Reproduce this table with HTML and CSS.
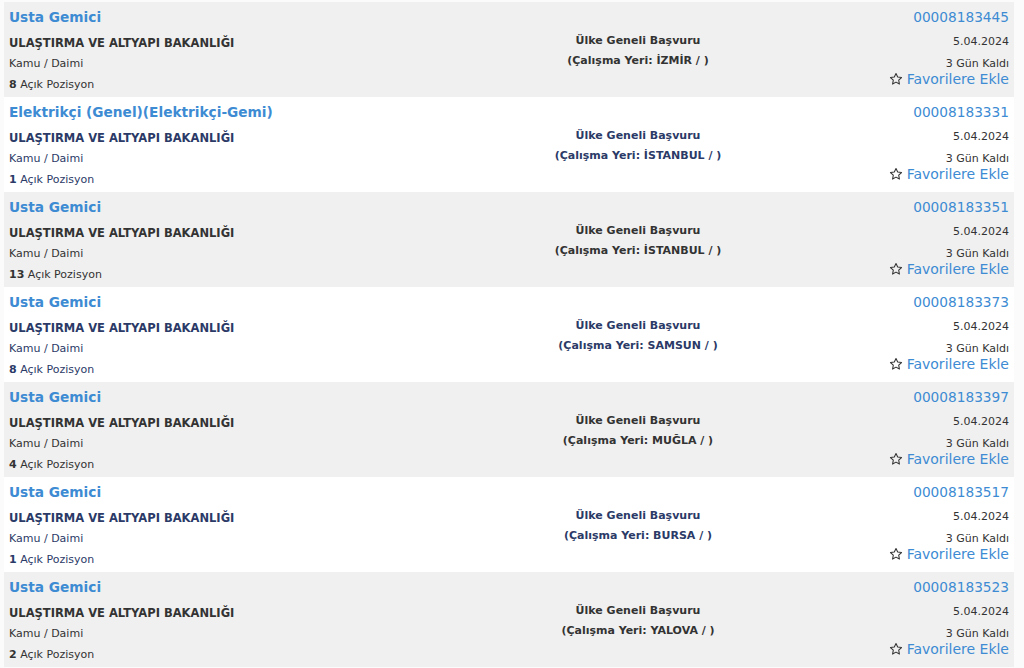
FILE: index.html
```html
<!DOCTYPE html>
<html lang="tr">
<head>
<meta charset="utf-8">
<title>İlanlar</title>
<link rel="stylesheet" href="styles.css">
</head>
<body>
<div class="list">
  <div class="row grey">
    <div class="left">
      <a class="title">Usta Gemici</a>
      <div class="org">ULAŞTIRMA VE ALTYAPI BAKANLIĞI</div>
      <div class="line">Kamu / Daimi</div>
      <div class="line"><b>8</b> Açık Pozisyon</div>
    </div>
    <div class="mid">
      <div class="line b">Ülke Geneli Başvuru</div>
      <div class="line b">(Çalışma Yeri: İZMİR / )</div>
    </div>
    <div class="right">
      <a class="id">00008183445</a>
      <div class="date">5.04.2024</div>
      <div class="left-days">3 Gün Kaldı</div>
      <a class="fav"><svg class="star" viewBox="0 0 24 24"><path d="M12 2.6l2.9 6.1 6.6.8-4.9 4.6 1.3 6.6L12 17.4l-5.9 3.3 1.3-6.6-4.9-4.6 6.6-.8z"/></svg>Favorilere Ekle</a>
    </div>
  </div>
  <div class="row white">
    <div class="left">
      <a class="title">Elektrikçi (Genel)(Elektrikçi-Gemi)</a>
      <div class="org">ULAŞTIRMA VE ALTYAPI BAKANLIĞI</div>
      <div class="line">Kamu / Daimi</div>
      <div class="line"><b>1</b> Açık Pozisyon</div>
    </div>
    <div class="mid">
      <div class="line b">Ülke Geneli Başvuru</div>
      <div class="line b">(Çalışma Yeri: İSTANBUL / )</div>
    </div>
    <div class="right">
      <a class="id">00008183331</a>
      <div class="date">5.04.2024</div>
      <div class="left-days">3 Gün Kaldı</div>
      <a class="fav"><svg class="star" viewBox="0 0 24 24"><path d="M12 2.6l2.9 6.1 6.6.8-4.9 4.6 1.3 6.6L12 17.4l-5.9 3.3 1.3-6.6-4.9-4.6 6.6-.8z"/></svg>Favorilere Ekle</a>
    </div>
  </div>
  <div class="row grey">
    <div class="left">
      <a class="title">Usta Gemici</a>
      <div class="org">ULAŞTIRMA VE ALTYAPI BAKANLIĞI</div>
      <div class="line">Kamu / Daimi</div>
      <div class="line"><b>13</b> Açık Pozisyon</div>
    </div>
    <div class="mid">
      <div class="line b">Ülke Geneli Başvuru</div>
      <div class="line b">(Çalışma Yeri: İSTANBUL / )</div>
    </div>
    <div class="right">
      <a class="id">00008183351</a>
      <div class="date">5.04.2024</div>
      <div class="left-days">3 Gün Kaldı</div>
      <a class="fav"><svg class="star" viewBox="0 0 24 24"><path d="M12 2.6l2.9 6.1 6.6.8-4.9 4.6 1.3 6.6L12 17.4l-5.9 3.3 1.3-6.6-4.9-4.6 6.6-.8z"/></svg>Favorilere Ekle</a>
    </div>
  </div>
  <div class="row white">
    <div class="left">
      <a class="title">Usta Gemici</a>
      <div class="org">ULAŞTIRMA VE ALTYAPI BAKANLIĞI</div>
      <div class="line">Kamu / Daimi</div>
      <div class="line"><b>8</b> Açık Pozisyon</div>
    </div>
    <div class="mid">
      <div class="line b">Ülke Geneli Başvuru</div>
      <div class="line b">(Çalışma Yeri: SAMSUN / )</div>
    </div>
    <div class="right">
      <a class="id">00008183373</a>
      <div class="date">5.04.2024</div>
      <div class="left-days">3 Gün Kaldı</div>
      <a class="fav"><svg class="star" viewBox="0 0 24 24"><path d="M12 2.6l2.9 6.1 6.6.8-4.9 4.6 1.3 6.6L12 17.4l-5.9 3.3 1.3-6.6-4.9-4.6 6.6-.8z"/></svg>Favorilere Ekle</a>
    </div>
  </div>
  <div class="row grey">
    <div class="left">
      <a class="title">Usta Gemici</a>
      <div class="org">ULAŞTIRMA VE ALTYAPI BAKANLIĞI</div>
      <div class="line">Kamu / Daimi</div>
      <div class="line"><b>4</b> Açık Pozisyon</div>
    </div>
    <div class="mid">
      <div class="line b">Ülke Geneli Başvuru</div>
      <div class="line b">(Çalışma Yeri: MUĞLA / )</div>
    </div>
    <div class="right">
      <a class="id">00008183397</a>
      <div class="date">5.04.2024</div>
      <div class="left-days">3 Gün Kaldı</div>
      <a class="fav"><svg class="star" viewBox="0 0 24 24"><path d="M12 2.6l2.9 6.1 6.6.8-4.9 4.6 1.3 6.6L12 17.4l-5.9 3.3 1.3-6.6-4.9-4.6 6.6-.8z"/></svg>Favorilere Ekle</a>
    </div>
  </div>
  <div class="row white">
    <div class="left">
      <a class="title">Usta Gemici</a>
      <div class="org">ULAŞTIRMA VE ALTYAPI BAKANLIĞI</div>
      <div class="line">Kamu / Daimi</div>
      <div class="line"><b>1</b> Açık Pozisyon</div>
    </div>
    <div class="mid">
      <div class="line b">Ülke Geneli Başvuru</div>
      <div class="line b">(Çalışma Yeri: BURSA / )</div>
    </div>
    <div class="right">
      <a class="id">00008183517</a>
      <div class="date">5.04.2024</div>
      <div class="left-days">3 Gün Kaldı</div>
      <a class="fav"><svg class="star" viewBox="0 0 24 24"><path d="M12 2.6l2.9 6.1 6.6.8-4.9 4.6 1.3 6.6L12 17.4l-5.9 3.3 1.3-6.6-4.9-4.6 6.6-.8z"/></svg>Favorilere Ekle</a>
    </div>
  </div>
  <div class="row grey">
    <div class="left">
      <a class="title">Usta Gemici</a>
      <div class="org">ULAŞTIRMA VE ALTYAPI BAKANLIĞI</div>
      <div class="line">Kamu / Daimi</div>
      <div class="line"><b>2</b> Açık Pozisyon</div>
    </div>
    <div class="mid">
      <div class="line b">Ülke Geneli Başvuru</div>
      <div class="line b">(Çalışma Yeri: YALOVA / )</div>
    </div>
    <div class="right">
      <a class="id">00008183523</a>
      <div class="date">5.04.2024</div>
      <div class="left-days">3 Gün Kaldı</div>
      <a class="fav"><svg class="star" viewBox="0 0 24 24"><path d="M12 2.6l2.9 6.1 6.6.8-4.9 4.6 1.3 6.6L12 17.4l-5.9 3.3 1.3-6.6-4.9-4.6 6.6-.8z"/></svg>Favorilere Ekle</a>
    </div>
  </div>
</div>
</body>
</html>
```

FILE: styles.css
```css
html, body {
  margin: 0;
  padding: 0;
  background: #fbfbfb;
}
body {
  font-family: "DejaVu Sans", Verdana, sans-serif;
  font-size: 11px;
}
.list {
  padding: 2px 10px 0 4px;
  display: flex;
  flex-direction: column;
}
.row {
  height: 95px;
  box-sizing: border-box;
  display: grid;
  grid-template-columns: 492px 274px 1fr;
  padding: 4px 5px 0 5px;
}
.row.grey {
  background: #f0f0f0;
  color: #333333;
}
.row.white {
  background: #ffffff;
  color: #2b3a67;
}
.title {
  display: block;
  font-size: 13.7px;
  font-weight: bold;
  color: #3d8bd3;
  line-height: 22px;
  margin-bottom: 5px;
}
.org {
  font-weight: bold;
  font-size: 11.5px;
  line-height: 21px;
}
.line {
  line-height: 20.5px;
}
.line b {
  font-weight: bold;
}
.mid {
  text-align: center;
  padding-top: 25px;
}
.mid .line {
  line-height: 20px;
}
.b {
  font-weight: bold;
}
.right {
  display: flex;
  flex-direction: column;
  align-items: flex-end;
  color: #333333;
}
.id {
  font-size: 13.7px;
  color: #3d8bd3;
  line-height: 22px;
}
.date {
  margin-top: 3px;
  line-height: 22px;
}
.left-days {
  line-height: 21px;
}
.fav {
  margin-top: -4px;
  font-size: 14px;
  line-height: 18px;
  color: #3d8bd3;
  display: flex;
  align-items: center;
  gap: 4px;
}
.star {
  width: 14px;
  height: 14px;
  fill: none;
  stroke: #333333;
  stroke-width: 1.8;
  stroke-linejoin: round;
}
```
